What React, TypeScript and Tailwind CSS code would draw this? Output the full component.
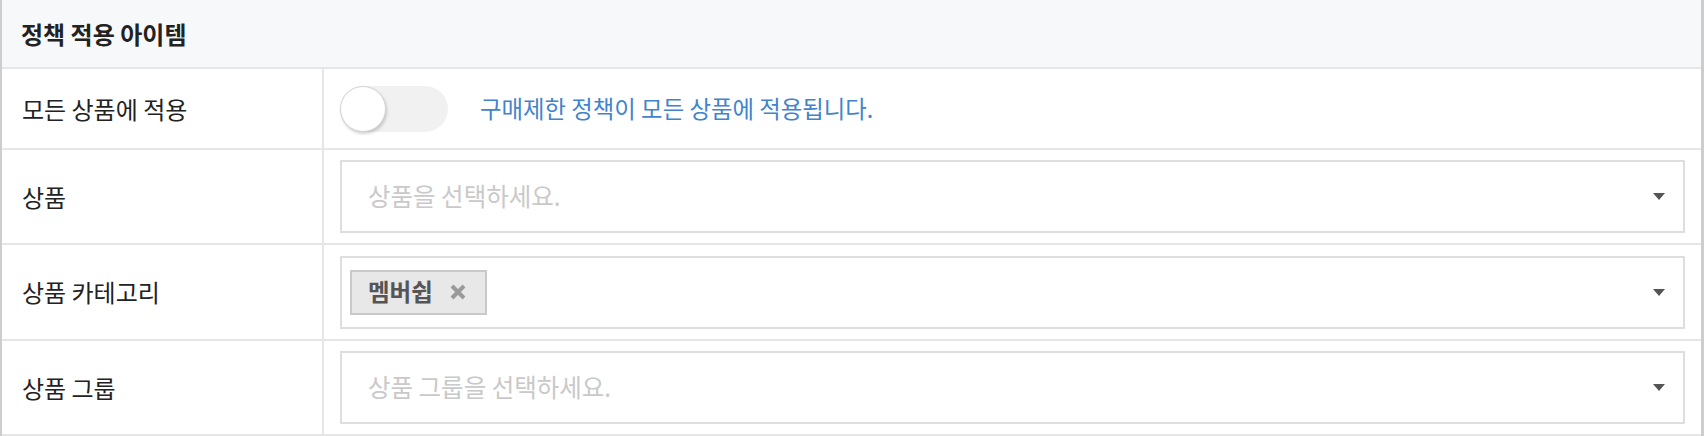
import React from 'react';

const font = { fontFamily: '"Noto Sans CJK KR", "Noto Sans", sans-serif' };

function Caret() {
  return (
    <svg width="12" height="7" viewBox="0 0 12 7" className="shrink-0">
      <path d="M0 0h12L6 7z" fill="#555" />
    </svg>
  );
}

function SelectBox({ children }: { children: React.ReactNode }) {
  return (
    <div className="flex h-[73px] w-full items-center justify-between border-2 border-[#dedede] bg-white pr-[18px]">
      <div className="flex items-center">{children}</div>
      <Caret />
    </div>
  );
}

function Row({ label, children, h }: { label: string; children: React.ReactNode; h: string }) {
  return (
    <div className={`grid grid-cols-[322px_1fr] ${h} border-b-2 border-[#e6e6e6]`}>
      <div className="flex items-center border-r-2 border-[#e6e6e6] pl-[20px] text-[24px] text-[#222]">{label}</div>
      <div className="flex items-center px-[16px]">{children}</div>
    </div>
  );
}

export default function App() {
  return (
    <div className="h-[436px] w-[1704px] overflow-hidden bg-white" style={font}>
      <div className="h-full border-l-2 border-r-[3px] border-[#cdcdcd]">
        <div className="flex h-[69px] items-center border-b-2 border-[#e6e6e6] bg-[#f7f8fa] pl-[19px] text-[24px] font-bold text-[#222]">
          정책 적용 아이템
        </div>

        <Row label="모든 상품에 적용" h="h-[81px]">
          <div className="relative h-[46px] w-[108px] rounded-full bg-[#f1f1f1]">
            <div className="absolute left-0 top-0 h-[46px] w-[46px] rounded-full border border-[#d4d4d4] bg-white shadow-[1px_2px_3px_rgba(0,0,0,0.18)]" />
          </div>
          <span className="ml-[32px] text-[23.4px] text-[#3f84cc]">구매제한 정책이 모든 상품에 적용됩니다.</span>
        </Row>

        <Row label="상품" h="h-[95px]">
          <SelectBox>
            <span className="pl-[26px] text-[24.5px] text-[#c9c9c9]">상품을 선택하세요.</span>
          </SelectBox>
        </Row>

        <Row label="상품 카테고리" h="h-[96px]">
          <SelectBox>
            <div className="ml-[8px] flex h-[45px] items-center gap-[17px] border-2 border-[#c9c9c9] bg-[#e8e8e8] pl-[16px] pr-[19px]">
              <span className="text-[23.5px] font-bold text-[#555]">멤버쉽</span>
              <svg width="16" height="16" viewBox="0 0 16 16">
                <path d="M2 2l12 12M14 2L2 14" stroke="#9a9a9a" strokeWidth="4" />
              </svg>
            </div>
          </SelectBox>
        </Row>

        <Row label="상품 그룹" h="h-[95px]">
          <SelectBox>
            <span className="pl-[26px] text-[24.5px] text-[#c9c9c9]">상품 그룹을 선택하세요.</span>
          </SelectBox>
        </Row>
      </div>
    </div>
  );
}
